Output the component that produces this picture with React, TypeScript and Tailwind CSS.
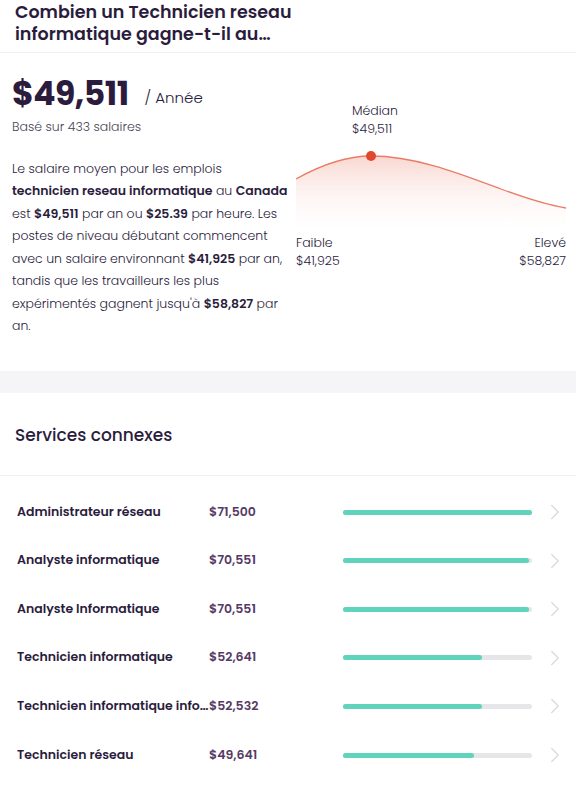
import { ChevronRight } from 'lucide-react';

const FONT = { fontFamily: '"Poppins", "Open Sans", "Noto Sans", sans-serif' };

interface Related {
  name: string;
  salary: number;
}

const related: Related[] = [
  { name: 'Administrateur réseau', salary: 71500 },
  { name: 'Analyste informatique', salary: 70551 },
  { name: 'Analyste Informatique', salary: 70551 },
  { name: 'Technicien informatique', salary: 52641 },
  { name: 'Technicien informatique informatique', salary: 52532 },
  { name: 'Technicien réseau', salary: 49641 },
];

const maxSalary = Math.max(...related.map(r => r.salary));

function SalaryCurve() {
  return (
    <svg width="270" height="96" viewBox="0 0 270 96" className="block">
      <defs>
        <linearGradient id="curveFill" x1="0" y1="0" x2="0" y2="1">
          <stop offset="0%" stopColor="#f6c9c0" stopOpacity="0.75" />
          <stop offset="100%" stopColor="#ffffff" stopOpacity="0" />
        </linearGradient>
      </defs>
      <path
        d="M0 38 C 25 24, 50 15, 75 15 C 120 15, 165 33, 205 48 C 232 58, 252 64, 270 67 L 270 96 L 0 96 Z"
        fill="url(#curveFill)"
      />
      <path
        d="M0 38 C 25 24, 50 15, 75 15 C 120 15, 165 33, 205 48 C 232 58, 252 64, 270 67"
        fill="none"
        stroke="#ea7c66"
        strokeWidth="1.3"
      />
      <circle cx="75" cy="15" r="5" fill="#e2482f" />
    </svg>
  );
}

export default function App() {
  const b = 'font-semibold text-[#2b1c3d]';
  return (
    <div className="w-[576px] bg-white text-[#2b1c3d]" style={FONT}>
      {/* Header */}
      <div className="h-[53px] border-b border-[#f0f0f3] px-[15px] pt-[1px]">
        <h1 className="w-[300px] line-clamp-2 text-[17.5px] font-semibold leading-[22px] text-[#2b1c3d]">
          Combien un Technicien reseau informatique gagne-t-il au Canada ?
        </h1>
      </div>

      {/* Salary overview */}
      <div className="flex pl-3 pr-[10px] pb-[33px]">
        <div className="w-[284px] shrink-0">
          <div className="flex items-baseline mt-[16px] h-[46px]">
            <span className="text-[33px] font-bold tracking-[-0.5px] text-[#2b1c3d]">$49,511</span>
            <span className="ml-[16px] -translate-y-[2px] text-[15px] font-light text-[#2b1c3d]">/ Année</span>
          </div>
          <p className="mt-[3px] text-[12.5px] font-light text-[#4a4354]">Basé sur 433 salaires</p>
          <p className="mt-[21px] pr-2 text-[12.5px] font-light leading-[22.5px] text-[#2b1c3d]">
            Le salaire moyen pour les emplois <b className={b}>technicien reseau informatique</b> au{' '}
            <b className={b}>Canada</b> est <b className={b}>$49,511</b> par an ou{' '}
            <b className={b}>$25.39</b> par heure. Les postes de niveau débutant commencent avec un salaire
            environnant <b className={b}>$41,925</b> par an, tandis que les travailleurs les plus
            expérimentés gagnent jusqu'à <b className={b}>$58,827</b> par an.
          </p>
        </div>

        <div className="w-[270px] shrink-0 pt-[49px] text-[12.5px] font-light leading-[18px] text-[#2b1c3d]">
          <div className="pl-[56px]">
            <div>Médian</div>
            <div>$49,511</div>
          </div>
          <div className="mt-[3px]">
            <SalaryCurve />
          </div>
          <div className="flex justify-between -mt-[3px]">
            <div>
              <div>Faible</div>
              <div>$41,925</div>
            </div>
            <div className="text-right">
              <div>Elevé</div>
              <div>$58,827</div>
            </div>
          </div>
        </div>
      </div>

      {/* Separator band */}
      <div className="h-[22px] bg-[#f5f5f8]" />

      {/* Related */}
      <div className="flex h-[83px] items-center border-b border-[#f0f0f3] px-[15px] pt-[4px]">
        <h2 className="text-[17px] font-medium text-[#2b1c3d]">Services connexes</h2>
      </div>

      <div className="pt-3 pb-4">
        {related.map(r => {
          const pct = (r.salary / maxSalary) * 100;
          return (
            <div key={r.name} className="flex h-[48.6px] items-center pl-[17px]">
              <div className="w-[192px] shrink-0 truncate text-[12.5px] font-semibold text-[#2b1c3d]">
                {r.name}
              </div>
              <div className="w-[134px] shrink-0 text-[12.5px] font-semibold text-[#553a66]">
                ${r.salary.toLocaleString('en-US')}
              </div>
              <div className="h-[5px] w-[189px] shrink-0 rounded-full bg-[#e6e6e8]">
                <div className="h-full rounded-full bg-[#5fd3bc]" style={{ width: `${pct}%` }} />
              </div>
              <ChevronRight className="ml-[10px] h-[26px] w-[26px] text-[#dcdce0]" strokeWidth={1.3} />
            </div>
          );
        })}
      </div>
    </div>
  );
}
